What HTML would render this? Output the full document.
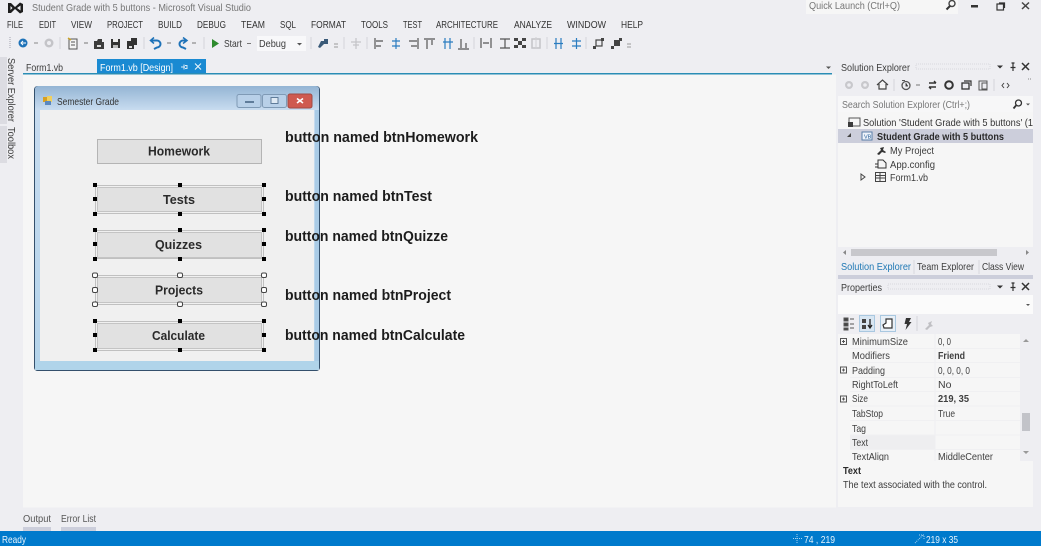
<!DOCTYPE html>
<html><head><meta charset="utf-8"><style>
html,body{margin:0;padding:0;background:#eeeef2;overflow:hidden}
svg{display:block;filter:blur(.35px)}
text{font-family:"Liberation Sans",sans-serif;font-size:10.5px;fill:#3c3c3c}
.m{fill:#333;font-size:10px}
.b{font-weight:bold;font-size:14.5px;fill:#1c1c1c}
.f{font-weight:bold;font-size:12.5px;fill:#2a2a2a}
.g{font-size:10.5px;fill:#3f3f3f}
.ic{fill:none;stroke:#555;stroke-width:1.2}
.bl{fill:none;stroke:#2a7cc0;stroke-width:1.2}
.hb{fill:#000}
.hw{fill:#fff;stroke:#444;stroke-width:1}
</style></head><body>
<svg width="1041" height="546" viewBox="0 0 1041 546" xmlns="http://www.w3.org/2000/svg">
<rect width="1041" height="546" fill="#eeeef2"/>

<!-- title bar -->
<path d="M8 3 L11 3 L15 7 L20 2.500 L23 4 L23 12 L20 13.500 L15 9 L11 13 L8 13 L8 3 Z M10.500 6 L10.500 10 L12.500 8 Z M20.500 5.500 L17 8 L20.500 10.500 Z" fill="#1e1e1e" fill-rule="evenodd"/>
<text x="32" y="11" textLength="219" lengthAdjust="spacingAndGlyphs" style="fill:#767676">Student Grade with 5 buttons - Microsoft Visual Studio</text>
<rect x="806" y="0" width="152" height="14" fill="#f6f6f6"/>
<text x="809" y="9" textLength="91" lengthAdjust="spacingAndGlyphs" style="fill:#767676">Quick Launch (Ctrl+Q)</text>
<circle cx="952" cy="3.500" r="3" fill="none" stroke="#444" stroke-width="1.4"/><path d="M950 6 L946.500 9.500" stroke="#333" stroke-width="2"/>
<rect x="971" y="5" width="7" height="2.500" fill="#333"/>
<rect x="997" y="4" width="6.500" height="6" fill="none" stroke="#333" stroke-width="1.2"/><path d="M999 3 h5.500 v5" fill="none" stroke="#333" stroke-width="1.200"/>
<path d="M1022 2.500 L1029 9 M1029 2.500 L1022 9" stroke="#444" stroke-width="1.500"/>

<!-- menu -->
<text class="m" x="7" y="28" textLength="16" lengthAdjust="spacingAndGlyphs">FILE</text>
<text class="m" x="39" y="28" textLength="17" lengthAdjust="spacingAndGlyphs">EDIT</text>
<text class="m" x="71" y="28" textLength="21" lengthAdjust="spacingAndGlyphs">VIEW</text>
<text class="m" x="107" y="28" textLength="36" lengthAdjust="spacingAndGlyphs">PROJECT</text>
<text class="m" x="158" y="28" textLength="24" lengthAdjust="spacingAndGlyphs">BUILD</text>
<text class="m" x="197" y="28" textLength="29" lengthAdjust="spacingAndGlyphs">DEBUG</text>
<text class="m" x="241" y="28" textLength="24" lengthAdjust="spacingAndGlyphs">TEAM</text>
<text class="m" x="280" y="28" textLength="16" lengthAdjust="spacingAndGlyphs">SQL</text>
<text class="m" x="311" y="28" textLength="35" lengthAdjust="spacingAndGlyphs">FORMAT</text>
<text class="m" x="361" y="28" textLength="27" lengthAdjust="spacingAndGlyphs">TOOLS</text>
<text class="m" x="403" y="28" textLength="19" lengthAdjust="spacingAndGlyphs">TEST</text>
<text class="m" x="436" y="28" textLength="62" lengthAdjust="spacingAndGlyphs">ARCHITECTURE</text>
<text class="m" x="514" y="28" textLength="38" lengthAdjust="spacingAndGlyphs">ANALYZE</text>
<text class="m" x="567" y="28" textLength="39" lengthAdjust="spacingAndGlyphs">WINDOW</text>
<text class="m" x="621" y="28" textLength="22" lengthAdjust="spacingAndGlyphs">HELP</text>

<!-- toolbar -->
<path d="M10 37 v12" stroke="#c8c8d0" stroke-width="2" stroke-dasharray="1 1"/>
<circle cx="23" cy="43" r="4.500" fill="#1e72b8"/><path d="M26 43 H21 M23 41 L21 43 L23 45" stroke="#fff" stroke-width="1" fill="none"/>
<path d="M34 43 h4" stroke="#888" stroke-width="1"/>
<circle cx="49" cy="43" r="4.500" fill="#c4c4c8"/><circle cx="49" cy="43" r="2" fill="#eeeef2"/>
<path d="M60 37 v12" stroke="#d4d4da"/>
<rect x="69" y="39" width="8" height="10" fill="#f4f4f4" stroke="#555"/><path d="M71 42 h4 M71 45 h4" stroke="#555"/><path d="M68 38 l3 2" stroke="#c9a227" stroke-width="1.500"/>
<path d="M84 43 h4" stroke="#777"/>
<path d="M94 41 h3 l1 -2 h4 v3 h2 v7 h-10 z" fill="#3c3c3c"/><rect x="97" y="45" width="4" height="2" fill="#ddd"/>
<path d="M111 39 h9 v9 h-9 z" fill="#333"/><rect x="113" y="39" width="5" height="3" fill="#eee"/><rect x="113" y="45" width="5" height="3" fill="#bbb"/>
<path d="M127 41 h7 v8 h-7 z" fill="#333"/><path d="M131 38 h6 v7 h-3 v-4 h-3 z" fill="#333"/><rect x="129" y="46" width="3" height="2" fill="#ddd"/>
<path d="M144 37 v12" stroke="#d4d4da"/>
<path d="M151 40.500 h6 a3.500 3.500 0 0 1 0 7 l-3 1.500" fill="none" stroke="#1e72b8" stroke-width="2"/><path d="M154 37.500 L150.500 40.500 L154 43.500" fill="none" stroke="#1e72b8" stroke-width="1.500"/>
<path d="M167 43 h4" stroke="#777"/>
<path d="M186 40.500 h-3 a3.500 3.500 0 0 0 0 7 l3 1.500" fill="none" stroke="#1e72b8" stroke-width="2"/><path d="M183 37.500 L187 40.500 L183 43.500" fill="none" stroke="#1e72b8" stroke-width="1.500"/>
<path d="M192 43 h4" stroke="#777"/>
<path d="M204 37 v12" stroke="#d4d4da"/>
<path d="M212 39 L219 43.500 L212 48 Z" fill="#2e8b2e"/>
<text x="224" y="47" textLength="18" lengthAdjust="spacingAndGlyphs">Start</text>
<path d="M247 43.500 h4" stroke="#777"/>
<rect x="257" y="36" width="49" height="15" fill="#f8f8fa"/>
<text x="259" y="47" textLength="27" lengthAdjust="spacingAndGlyphs">Debug</text>
<path d="M297 43 h5 l-2.500 2.500 z" fill="#555"/>
<path d="M311 37 v12" stroke="#d4d4da"/>
<path d="M318 47 l3 -6 h3 v-2 h4 v5 h-4 l-4 4 z" fill="#3a5a78"/>
<path d="M334 44 h4 M334 47 h4" stroke="#999"/>
<path d="M344 37 v12" stroke="#d4d4da"/>
<path d="M356 38 v11 M351 42 h10 M353 45 h6" stroke="#c4c4c8" stroke-width="1.200"/>
<path d="M367 37 v12" stroke="#d4d4da"/>
<path class="ic" d="M375 38 v11 M376 41 h7 M376 46 h5"/>
<path class="bl" d="M396 38 v11 M392 41 h8 M392 46 h8"/>
<path class="ic" d="M418 38 v11 M409 41 h8 M411 46 h6"/>
<path class="ic" d="M424 39 h11 M427 40 v9 M432 40 v5"/>
<path class="bl" d="M443 42 h10 M445 38 v11 M450 38 v11" />
<path class="ic" d="M458 49 h11 M461 39 v9 M466 43 v5"/>
<path d="M474 37 v12" stroke="#d4d4da"/>
<path class="ic" d="M481 38 v10 M491 38 v10 M483 43 h6"/>
<path class="ic" d="M500 39 h10 M500 48 h10 M505 39 v9"/>
<path d="M514 38 h4 v3 h-4 z M522 38 h4 v3 h-4 z M514 45 h4 v3 h-4 z M522 45 h4 v3 h-4 z M518 41 h4 v4 h-4 z" fill="#444"/>
<rect x="532" y="39" width="8" height="9" fill="none" stroke="#c4c4c8" stroke-width="1.500"/><path d="M536 37 v12" stroke="#d0d0d4"/>
<path d="M547 37 v12" stroke="#d4d4da"/>
<path class="bl" d="M556 38 v11 M561 38 v11 M554 43.500 h9"/>
<path class="bl" d="M572 41 h9 M572 46 h9 M576.500 38 v11"/>
<path d="M586 37 v12" stroke="#d4d4da"/>
<rect x="596" y="40" width="6" height="6" fill="none" stroke="#444" stroke-width="1.200"/><rect x="593" y="46" width="3" height="3" fill="#444"/><rect x="601" y="38" width="3" height="3" fill="#444"/>
<rect x="614" y="40" width="6" height="6" fill="#444"/><rect x="611" y="46" width="3" height="3" fill="#444"/><rect x="619" y="38" width="3" height="3" fill="#444"/>
<path d="M627 44 h4 M627 47 h4" stroke="#999"/>

<!-- tabs -->
<text x="26" y="71" textLength="37" lengthAdjust="spacingAndGlyphs">Form1.vb</text>
<rect x="97" y="59" width="109" height="15" fill="#1a8ad2"/>
<text x="100" y="71" textLength="73" lengthAdjust="spacingAndGlyphs" style="fill:#fff">Form1.vb [Design]</text>
<path d="M181 67 h4 M184 64.500 v5 M185 65.500 h2 v3 h-2" stroke="#d6eaf8" fill="none"/>
<path d="M195 63.500 L201 69.500 M201 63.500 L195 69.500" stroke="#eaf5fc" stroke-width="1.100"/>
<path d="M826 66.500 h5 l-2.500 2.500 z" fill="#555"/>
<rect x="23" y="73" width="809" height="1.500" fill="#2a8db5"/>

<!-- left side tabs -->
<rect x="0" y="57" width="7" height="67" fill="#dcdce2"/>
<rect x="0" y="126" width="7" height="37" fill="#dcdce2"/>
<text transform="translate(8,58) rotate(90)" textLength="64" lengthAdjust="spacingAndGlyphs">Server Explorer</text>
<text transform="translate(8,127) rotate(90)" textLength="32" lengthAdjust="spacingAndGlyphs">Toolbox</text>

<!-- editor -->
<rect x="23" y="74.500" width="813" height="433" fill="#f6f6f6"/>

<!-- form -->
<defs>
<linearGradient id="tg" x1="0" y1="0" x2="0" y2="1"><stop offset="0" stop-color="#94b5d4"/><stop offset="1" stop-color="#c8dcf0"/></linearGradient>
<linearGradient id="fr" x1="0" y1="0" x2="0" y2="1"><stop offset="0" stop-color="#c8dcf0"/><stop offset="1" stop-color="#b4d3ea"/></linearGradient>
</defs>
<rect x="34.500" y="86.500" width="285" height="284" rx="3" fill="url(#fr)" stroke="#34506c"/>
<path d="M35 110 V89 a3 3 0 0 1 3 -3 H316 a3 3 0 0 1 3 3 V110 Z" fill="url(#tg)"/>
<rect x="40" y="110" width="274" height="251" fill="#f0f0f0"/>
<rect x="315" y="110" width="4" height="260" fill="#a9cbe6"/>
<rect x="35" y="361" width="284" height="9" fill="#b0d4ea"/>
<rect x="43" y="97" width="5" height="5" fill="#d8a020"/><rect x="47" y="96" width="5" height="6" fill="#f0d060"/><rect x="45" y="101" width="6" height="4" fill="#5a88c0"/>
<text x="57" y="105" textLength="62" lengthAdjust="spacingAndGlyphs" style="fill:#333">Semester Grade</text>
<rect x="237" y="94.500" width="24" height="13" rx="2" fill="#b8d0e8" stroke="#7f9ab5"/><rect x="245" y="101" width="9" height="2" fill="#5f7c9a"/>
<rect x="262.500" y="94.500" width="24" height="13" rx="2" fill="#b8d0e8" stroke="#7f9ab5"/><rect x="271" y="97.500" width="7" height="6" fill="#dfeaf4" stroke="#5f7c9a"/>
<rect x="288" y="94" width="24" height="14" rx="2" fill="#cf5a50" stroke="#a04a44"/><path d="M297 98.500 L303 103 M303 98.500 L297 103" stroke="#fff" stroke-width="1.600"/>

<!-- buttons -->
<rect x="97.500" y="139.500" width="164" height="24" fill="#e1e1e1" stroke="#b4b4b4"/>
<text class="f" x="148" y="155.500" textLength="62" lengthAdjust="spacingAndGlyphs">Homework</text>

<rect x="97.500" y="187.500" width="164" height="24" fill="#e1e1e1" stroke="#c4c4c4"/>
<text class="f" x="163" y="204" textLength="32" lengthAdjust="spacingAndGlyphs">Tests</text>
<rect x="97.500" y="232.500" width="164" height="25" fill="#e1e1e1" stroke="#c4c4c4"/>
<text class="f" x="155" y="249" textLength="47" lengthAdjust="spacingAndGlyphs">Quizzes</text>
<rect x="97.500" y="277.500" width="164" height="25" fill="#e1e1e1" stroke="#c4c4c4"/>
<text class="f" x="155" y="294.500" textLength="48" lengthAdjust="spacingAndGlyphs">Projects</text>
<rect x="97.500" y="323.500" width="164" height="25" fill="#e1e1e1" stroke="#c4c4c4"/>
<text class="f" x="152" y="340" textLength="53" lengthAdjust="spacingAndGlyphs">Calculate</text>

<g fill="none" stroke="#909090" stroke-dasharray="1 1">
<rect x="95.500" y="185.500" width="168" height="28"/>
<rect x="95.500" y="230.500" width="168" height="28"/>
<rect x="95.500" y="275.500" width="168" height="29"/>
<rect x="95.500" y="321.500" width="168" height="29"/>
</g>
<g class="hb">
<rect x="93" y="183" width="4" height="4"/><rect x="178" y="183" width="4" height="4"/><rect x="262" y="183" width="4" height="4"/>
<rect x="93" y="197" width="4" height="4"/><rect x="262" y="197" width="4" height="4"/>
<rect x="93" y="212" width="4" height="4"/><rect x="178" y="212" width="4" height="4"/><rect x="262" y="212" width="4" height="4"/>
<rect x="93" y="228" width="4" height="4"/><rect x="178" y="228" width="4" height="4"/><rect x="262" y="228" width="4" height="4"/>
<rect x="93" y="242" width="4" height="4"/><rect x="262" y="242" width="4" height="4"/>
<rect x="93" y="257" width="4" height="4"/><rect x="178" y="257" width="4" height="4"/><rect x="262" y="257" width="4" height="4"/>
<rect x="93" y="319" width="4" height="4"/><rect x="178" y="319" width="4" height="4"/><rect x="262" y="319" width="4" height="4"/>
<rect x="93" y="333" width="4" height="4"/><rect x="262" y="333" width="4" height="4"/>
<rect x="93" y="348" width="4" height="4"/><rect x="178" y="348" width="4" height="4"/><rect x="262" y="348" width="4" height="4"/>
</g>
<g class="hw">
<rect x="92.500" y="273" width="5" height="4.500" rx="1.500"/><rect x="177.500" y="273" width="5" height="4.500" rx="1.500"/><rect x="261.500" y="273" width="5" height="4.500" rx="1.500"/>
<rect x="92.500" y="287.500" width="5" height="5" rx="1.500"/><rect x="261.500" y="287.500" width="5" height="5" rx="1.500"/>
<rect x="92.500" y="302" width="5" height="4.500" rx="1.500"/><rect x="177.500" y="302" width="5" height="4.500" rx="1.500"/><rect x="261.500" y="302" width="5" height="4.500" rx="1.500"/>
</g>

<!-- labels -->
<text class="b" x="285" y="142" textLength="193" lengthAdjust="spacingAndGlyphs">button named btnHomework</text>
<text class="b" x="285" y="201" textLength="147" lengthAdjust="spacingAndGlyphs">button named btnTest</text>
<text class="b" x="285" y="241" textLength="163" lengthAdjust="spacingAndGlyphs">button named btnQuizze</text>
<text class="b" x="285" y="300" textLength="166" lengthAdjust="spacingAndGlyphs">button named btnProject</text>
<text class="b" x="285" y="340" textLength="180" lengthAdjust="spacingAndGlyphs">button named btnCalculate</text>

<!-- solution explorer -->
<text x="841" y="71" textLength="69" lengthAdjust="spacingAndGlyphs">Solution Explorer</text>
<rect x="916" y="64" width="74" height="5" fill="none" stroke="#d8d8de" stroke-dasharray="1 1"/>
<path d="M997 65.500 h6 l-3 3 z" fill="#333"/>
<path d="M1013 63 v4 M1010.500 67.500 h5 M1013 68 v3 M1011.500 63 h3" stroke="#333" stroke-width="1.200"/>
<path d="M1022 63 L1029 70 M1029 63 L1022 70" stroke="#333" stroke-width="1.500"/>
<circle cx="849" cy="85" r="4" fill="#c8c8cc"/><circle cx="865" cy="85" r="4" fill="#c8c8cc"/>
<circle cx="849" cy="85" r="1.800" fill="#eeeef2"/><circle cx="865" cy="85" r="1.800" fill="#eeeef2"/>
<path d="M877 85 L882.500 80 L888 85 M879 84 v5 h7 v-5" fill="#f6f6f6" stroke="#444" stroke-width="1.200"/>
<path d="M894 79 v12" stroke="#d4d4da"/>
<circle cx="906" cy="85.500" r="4" fill="none" stroke="#555" stroke-width="1.300"/><path d="M906 83 v3 h2 M902 80.500 h3" stroke="#555"/>
<path d="M916 85 h4" stroke="#777"/>
<path d="M929 83 h7 M936 83 l-2 -2 M936 87 h-7 M929 87 l2 2" stroke="#333" stroke-width="1.400" fill="none"/>
<circle cx="949" cy="85" r="3.800" fill="none" stroke="#333" stroke-width="2"/>
<rect x="962" y="83" width="7" height="6" fill="none" stroke="#333" stroke-width="1.300"/><path d="M964 81 h7 v5" fill="none" stroke="#333" stroke-width="1.200"/>
<rect x="979" y="81" width="8" height="9" fill="none" stroke="#555"/><rect x="982" y="83" width="5" height="6" fill="none" stroke="#555"/>
<path d="M994 79 v12" stroke="#d4d4da"/>
<path d="M1004 83 l-2 2.500 l2 2.500 M1007 83 l2 2.500 l-2 2.500" fill="none" stroke="#444"/>
<path d="M1028 79 h1 M1030 79 h1" stroke="#888"/>

<rect x="838" y="96" width="195" height="16" fill="#f7f7f8"/>
<text x="842" y="108" textLength="128" lengthAdjust="spacingAndGlyphs" style="fill:#777">Search Solution Explorer (Ctrl+;)</text>
<circle cx="1018.500" cy="103" r="3" fill="none" stroke="#333" stroke-width="1.300"/><path d="M1016 105.500 L1013.500 108.500" stroke="#333" stroke-width="1.800"/>
<path d="M1026 103.500 h4 l-2 2 z" fill="#555"/>

<rect x="838" y="112" width="195" height="135" fill="#f6f6f6"/>
<rect x="838" y="129" width="195" height="14" fill="#cccedb"/>
<rect x="849" y="118" width="11" height="8" fill="none" stroke="#555"/><rect x="848" y="122" width="5" height="5" fill="#3c3c3c"/>
<text x="863" y="126" textLength="170" lengthAdjust="spacingAndGlyphs" style="fill:#333">Solution 'Student Grade with 5 buttons' (1</text>
<path d="M851 133 v4 h-4 z" fill="#444"/>
<rect x="862" y="132" width="10" height="8" fill="#eef3fa" stroke="#5a7fa8"/>
<text x="864" y="138.500" style="font-size:5.500px;fill:#1e5a96">VB</text>
<text x="877" y="140" textLength="127" lengthAdjust="spacingAndGlyphs" style="font-weight:bold;fill:#2a2a2a">Student Grade with 5 buttons</text>
<path d="M877 154 l4 -4 l-1 -2 l4 -1 l-1 3 l3 2 l-1 1 l-3 -1 l-3 3 z" fill="#333"/>
<text x="890" y="154" textLength="44" lengthAdjust="spacingAndGlyphs">My Project</text>
<path d="M878 160 h5 l3 3 v5 h-8 z" fill="none" stroke="#333"/><path d="M875 164 h3 M875 167 h3" stroke="#333"/>
<text x="890" y="168" textLength="45" lengthAdjust="spacingAndGlyphs">App.config</text>
<path d="M861 174 l4 3 l-4 3 z" fill="#f6f6f6" stroke="#444"/>
<rect x="875.500" y="172.500" width="10" height="9" fill="#f4f4f4" stroke="#444"/><path d="M880 173 v8 M876 175.500 h9 M876 178 h9" stroke="#444"/>
<text x="890" y="181" textLength="38" lengthAdjust="spacingAndGlyphs">Form1.vb</text>

<rect x="838" y="247" width="195" height="12" fill="#eeeef2"/>
<rect x="851" y="249" width="146" height="7" fill="#c8c8cc"/>
<path d="M846 250 v5 l-3 -2.500 z" fill="#888"/><path d="M1026 250 v5 l3 -2.500 z" fill="#888"/>
<text x="841" y="270" textLength="70" lengthAdjust="spacingAndGlyphs" style="fill:#1f78b4">Solution Explorer</text>
<text x="917" y="270" textLength="57" lengthAdjust="spacingAndGlyphs">Team Explorer</text>
<text x="982" y="270" textLength="42" lengthAdjust="spacingAndGlyphs">Class View</text>
<path d="M914 260 v14 M979 260 v14" stroke="#d8d8de"/>
<rect x="838" y="275" width="195" height="4" fill="#cccedb"/>

<!-- properties -->
<text x="841" y="291" textLength="41" lengthAdjust="spacingAndGlyphs">Properties</text>
<rect x="888" y="284" width="102" height="5" fill="none" stroke="#d8d8de" stroke-dasharray="1 1"/>
<path d="M997 285.500 h6 l-3 3 z" fill="#333"/>
<path d="M1013 283 v4 M1010.500 287.500 h5 M1013 288 v3 M1011.500 283 h3" stroke="#333" stroke-width="1.200"/>
<path d="M1022 283 L1029 290 M1029 283 L1022 290" stroke="#333" stroke-width="1.500"/>
<rect x="838" y="295" width="195" height="19" fill="#fbfbfb"/>
<path d="M1026 304 h4 l-2 2 z" fill="#555"/>
<rect x="838" y="314" width="195" height="20" fill="#eeeef2"/>
<path d="M844 318 h4 v3 h-4 z M844 323 h4 v3 h-4 z M844 328 h4 v2 h-4 z M850 319 h4 M850 324 h4 M850 328 h4" fill="#444" stroke="#555"/>
<rect x="859.500" y="315.500" width="15" height="16" fill="#d8e6f2" stroke="#a9c8e0"/>
<path d="M862 319 h4 v4 h-4 z M862 325 h4 v4 h-4 z" fill="#444"/><path d="M870 319 v8 M868 325 l2 3 l2 -3" stroke="#222" fill="none" stroke-width="1.300"/>
<rect x="880.500" y="315.500" width="15" height="16" fill="#e8eff6" stroke="#a9c8e0"/>
<path d="M886 319 h6 v9 h-8 l-1 -3 l3 -2 z" fill="#fff" stroke="#333" stroke-width="1.200"/>
<path d="M906 318 l5 0 l-2 4 l2.500 0 l-6 8 l1.500 -6 l-2.500 0 z" fill="#333"/>
<path d="M917 316 v15" stroke="#d4d4da"/>
<path d="M925 329 l4 -4 l-1 -2 l4 -2 l-1 3 l2 2 l-3 1 l-3 3 z" fill="#c0c0c4"/>

<rect x="838" y="334" width="182" height="128" fill="#f6f6f6"/>
<rect x="1020" y="334" width="13" height="128" fill="#eeeef2"/>
<rect x="1022" y="413" width="8" height="18" fill="#c2c3c9"/>
<path d="M1023 342 l3 -3 l3 3 z M1023 451 l3 3 l3 -3 z" fill="#999"/>
<rect x="850" y="435" width="85" height="14.500" fill="#eeeef0"/>
<path d="M935 334 v128" stroke="#efeff1"/>
<path d="M850 348.500 h170 M850 362.500 h170 M850 377.500 h170 M850 391.500 h170 M850 406 h170 M850 420.500 h170 M850 435 h170 M850 449.500 h170" stroke="#f0f0f2"/>
<g fill="none" stroke="#555"><rect x="840.500" y="338.500" width="6" height="6"/><rect x="840.500" y="367" width="6" height="6"/><rect x="840.500" y="396" width="6" height="6"/></g>
<path d="M842 341.500 h3 M843.500 340 v3 M842 370 h3 M843.500 368.500 v3 M842 399 h3 M843.500 397.500 v3" stroke="#555"/>
<text class="g" x="852" y="345" textLength="56" lengthAdjust="spacingAndGlyphs">MinimumSize</text><text class="g" x="938" y="345" textLength="13" lengthAdjust="spacingAndGlyphs">0, 0</text>
<text class="g" x="852" y="359" textLength="38" lengthAdjust="spacingAndGlyphs">Modifiers</text><text class="g" x="938" y="359" textLength="27" lengthAdjust="spacingAndGlyphs" style="font-weight:bold">Friend</text>
<text class="g" x="852" y="374" textLength="33" lengthAdjust="spacingAndGlyphs">Padding</text><text class="g" x="938" y="374" textLength="32" lengthAdjust="spacingAndGlyphs">0, 0, 0, 0</text>
<text class="g" x="852" y="388" textLength="46" lengthAdjust="spacingAndGlyphs">RightToLeft</text><text class="g" x="938" y="388">No</text>
<text class="g" x="852" y="402" textLength="16" lengthAdjust="spacingAndGlyphs">Size</text><text class="g" x="938" y="402" textLength="31" lengthAdjust="spacingAndGlyphs" style="font-weight:bold">219, 35</text>
<text class="g" x="852" y="417" textLength="31" lengthAdjust="spacingAndGlyphs">TabStop</text><text class="g" x="938" y="417" textLength="17" lengthAdjust="spacingAndGlyphs">True</text>
<text class="g" x="852" y="432" textLength="14" lengthAdjust="spacingAndGlyphs">Tag</text>
<text class="g" x="852" y="446" textLength="16" lengthAdjust="spacingAndGlyphs">Text</text>
<text class="g" x="852" y="460" textLength="37" lengthAdjust="spacingAndGlyphs">TextAlign</text><text class="g" x="938" y="460" textLength="55" lengthAdjust="spacingAndGlyphs">MiddleCenter</text>
<rect x="838" y="461" width="195" height="46" fill="#f6f6f6"/>
<text x="843" y="474" textLength="18" lengthAdjust="spacingAndGlyphs" style="font-weight:bold;fill:#2a2a2a">Text</text>
<text x="843" y="488" textLength="144" lengthAdjust="spacingAndGlyphs">The text associated with the control.</text>

<!-- bottom tabs -->
<text x="23" y="522" textLength="28" lengthAdjust="spacingAndGlyphs" style="fill:#555">Output</text>
<text x="61" y="522" textLength="35" lengthAdjust="spacingAndGlyphs" style="fill:#555">Error List</text>
<rect x="23" y="527" width="28" height="4" fill="#cccedb"/>
<rect x="61" y="527" width="35" height="4" fill="#cccedb"/>

<!-- status bar -->
<rect x="0" y="531" width="1041" height="15" fill="#007acc"/>
<text x="2" y="543" textLength="24" lengthAdjust="spacingAndGlyphs" style="fill:#e8f4fc">Ready</text>
<path d="M797 534 v9 M793 538.500 h9" stroke="#a8d2ee" stroke-dasharray="1 1"/>
<text x="804" y="543" textLength="31" lengthAdjust="spacingAndGlyphs" style="fill:#e8f4fc">74 , 219</text>
<path d="M915 543 l8 -8 M919 535 h5 v4" stroke="#a8d2ee" stroke-dasharray="1 1" fill="none"/>
<text x="926" y="543" textLength="32" lengthAdjust="spacingAndGlyphs" style="fill:#e8f4fc">219 x 35</text>
</svg>
</body></html>
